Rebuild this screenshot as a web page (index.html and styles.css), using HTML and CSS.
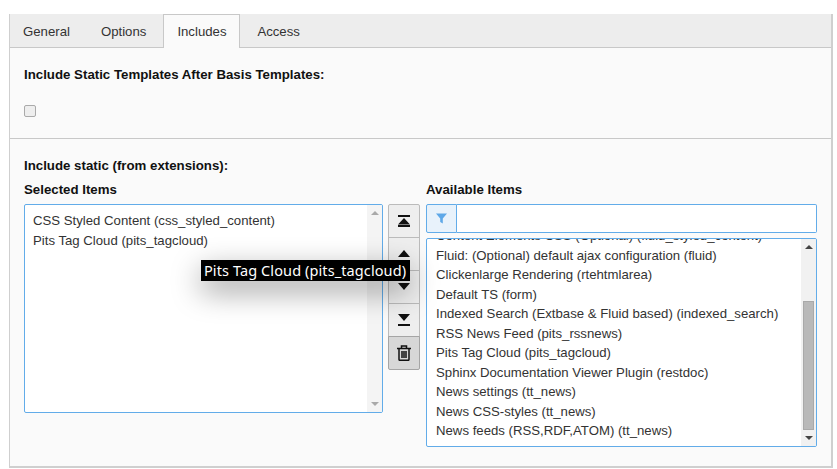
FILE: index.html
```html
<!DOCTYPE html>
<html lang="en">
<head>
<meta charset="utf-8">
<title>Includes</title>
<link rel="stylesheet" href="styles.css">
</head>
<body>
<div class="panel">
  <div class="tabs">
    <a class="tab">General</a>
    <a class="tab">Options</a>
    <a class="tab active">Includes</a>
    <a class="tab">Access</a>
  </div>
  <section class="sec first">
    <div class="label">Include Static Templates After Basis Templates:</div>
    <span class="check"></span>
  </section>
  <section class="sec second">
    <div class="label">Include static (from extensions):</div>
    <div class="multi">
      <div class="col-sel">
        <div class="label sub">Selected Items</div>
        <div class="listbox sel-box">
          <ul class="items">
            <li>CSS Styled Content (css_styled_content)</li>
            <li>Pits Tag Cloud (pits_tagcloud)</li>
          </ul>
          <div class="sbar">
            <span class="arrow up muted"></span>
            <span class="sp"></span>
            <span class="arrow down muted"></span>
          </div>
        </div>
      </div>
      <div class="btns">
        <button class="btn"><svg class="solid" width="12" height="12" viewBox="0 0 12 12"><path d="M0 0h12v2H0zM6 3l6 6.500H0zM0 10h12v2H0z"/></svg></button>
        <button class="btn"><svg class="solid" width="12" height="8" viewBox="0 0 12 8"><path d="M6 0l6 7H0z"/></svg></button>
        <button class="btn"><svg class="solid" width="12" height="8" viewBox="0 0 12 8"><path d="M0 0h12L6 7z"/></svg></button>
        <button class="btn"><svg class="solid" width="12" height="12" viewBox="0 0 12 12"><path d="M0 0h12L6 7zM0 10h12v2H0z"/></svg></button>
        <button class="btn on"><svg class="line" width="14" height="16" viewBox="0 0 14 16"><path d="M0 3.500h14M4.500 3V1h5v2M2 4v10.500c0 .500.300.800.800.800h8.400c.500 0 .800-.300.800-.800V4M5 6v7M7 6v7M9 6v7"/></svg></button>
      </div>
      <div class="col-avail">
        <div class="label sub">Available Items</div>
        <div class="filter">
          <span class="addon"><svg width="11" height="11" viewBox="0 0 11 11"><path d="M0 .500h11L6.800 5.500V10.500L4.200 9V5.500z" fill="#5ea8e8"/></svg></span>
          <span class="field"></span>
        </div>
        <div class="listbox avail-box">
          <ul class="items scrolled">
            <li>Content Elements CSS (Optional) (fluid_styled_content)</li>
            <li>Fluid: (Optional) default ajax configuration (fluid)</li>
            <li>Clickenlarge Rendering (rtehtmlarea)</li>
            <li>Default TS (form)</li>
            <li>Indexed Search (Extbase &amp; Fluid based) (indexed_search)</li>
            <li>RSS News Feed (pits_rssnews)</li>
            <li>Pits Tag Cloud (pits_tagcloud)</li>
            <li>Sphinx Documentation Viewer Plugin (restdoc)</li>
            <li>News settings (tt_news)</li>
            <li>News CSS-styles (tt_news)</li>
            <li>News feeds (RSS,RDF,ATOM) (tt_news)</li>
          </ul>
          <div class="sbar">
            <span class="arrow up"></span>
            <span class="sp"></span>
            <span class="thumb"></span>
            <span class="arrow down"></span>
          </div>
        </div>
      </div>
    </div>
  </section>
  <div class="tooltip">Pits Tag Cloud (pits_tagcloud)</div>
</div>
</body>
</html>
```

FILE: styles.css
```css
* { box-sizing: border-box; }
html, body { margin: 0; height: 100%; }
body {
  background: #fff;
  padding: 14px 4px 0 9px;
  font-family: "Liberation Sans", Arial, sans-serif;
  font-size: 13.2px;
  color: #333;
  overflow: hidden;
}
.panel {
  position: relative;
  height: 454px;
  background: #fafafa;
  border: 1px solid #cfcfcf;
  border-width: 0 2px 2px 1px;
}
.tabs {
  display: flex;
  height: 34px;
  background: #ededed;
  border-bottom: 1px solid #c8c8c8;
}
.tab {
  padding: 10px 14px 0;
  height: 33px;
  line-height: 15px;
  margin-right: 2px;
}
.tab:first-child { padding-left: 13px; padding-right: 15px; }
.tab:nth-child(2) { margin-right: 3px; }
.tab.active {
  height: 34px;
  background: #fafafa;
  border: 1px solid #c8c8c8;
  border-bottom: 0;
  padding: 9px 13px 0;
  margin: 0 3px 0 0;
  width: 77px;
}
.sec { padding: 0 14px; }
.first {
  height: 91px;
  padding-top: 19px;
  border-bottom: 1px solid #c8c8c8;
}
.label {
  font-size: 13.28px;
  font-weight: bold;
  color: #111;
  line-height: 15px;
}
.check {
  display: block;
  width: 12px;
  height: 12px;
  margin-top: 23px;
  background: #eee;
  border: 1px solid #aaa;
  border-radius: 2px;
}
.second { padding-top: 19px; }
.multi { display: flex; margin-top: 9px; }
.sub { height: 15px; }
.col-sel { width: 359px; }
.col-avail { width: 391px; }
.listbox {
  display: flex;
  background: #fff;
  border: 1px solid #62ace9;
  border-radius: 2px;
  overflow: hidden;
}
.sel-box { height: 209px; margin-top: 7px; }
.avail-box { height: 209px; margin-top: 5px; }
.items {
  flex: 1;
  list-style: none;
  margin: 0;
  padding: 6px 8px;
  overflow: hidden;
}
.items li { height: 19.5px; line-height: 19.5px; white-space: nowrap; }
.items.scrolled { padding: 0 9px; margin-top: -13px; }
.sbar {
  width: 15px;
  background: #f1f1f1;
  display: flex;
  flex-direction: column;
  align-items: center;
}
.sel-box .sbar { background: #f4f4f4; }
.sp { flex: 1; }
.arrow {
  flex: none;
  width: 0;
  height: 0;
  border-left: 4px solid transparent;
  border-right: 4px solid transparent;
  margin: 6px 0;
}
.arrow.up { border-bottom: 4px solid #444; }
.arrow.down { border-top: 4px solid #444; }
.arrow.up.muted { border-bottom-color: #a9a9a9; }
.arrow.down.muted { border-top-color: #a9a9a9; }
.thumb {
  flex: none;
  width: 11px;
  height: 129px;
  background: #b9b9b9;
  border: 1px solid #a9a9a9;
}
.btns {
  width: 32px;
  margin: 22px 6px 0 5px;
  display: flex;
  flex-direction: column;
}
.btn {
  display: flex;
  align-items: center;
  justify-content: center;
  width: 32px;
  height: 34px;
  margin: 0 0 -1px;
  padding: 0;
  background: #eee;
  border: 1px solid #bbb;
  border-radius: 0;
}
.btn svg { display: block; }
.solid { fill: #111; }
.line { fill: none; stroke: #111; stroke-width: 1.5; }
.btn:first-child { border-radius: 2px 2px 0 0; }
.btn.on {
  background: #d7d7d7;
  border-color: #a5a5a5;
  border-radius: 0 0 2px 2px;
}
.filter { display: flex; height: 29px; margin-top: 7px; }
.addon {
  display: flex;
  align-items: center;
  justify-content: center;
  width: 31px;
  background: #e8f2fb;
  border: 1px solid #62ace9;
  border-radius: 2px 0 0 2px;
}
.field {
  flex: 1;
  background: #fff;
  border: 1px solid #62ace9;
  border-left: 0;
  border-radius: 0 2px 2px 0;
}
.tooltip {
  position: absolute;
  left: 191px;
  top: 246px;
  width: 209px;
  height: 21px;
  padding: 0 3px;
  background: #000;
  color: #fff;
  font-family: "Noto Sans", sans-serif;
  font-size: 14.5px;
  letter-spacing: .1px;
  line-height: 21px;
  white-space: nowrap;
  box-shadow: 0 10px 30px rgba(0, 0, 0, .4);
}
```
